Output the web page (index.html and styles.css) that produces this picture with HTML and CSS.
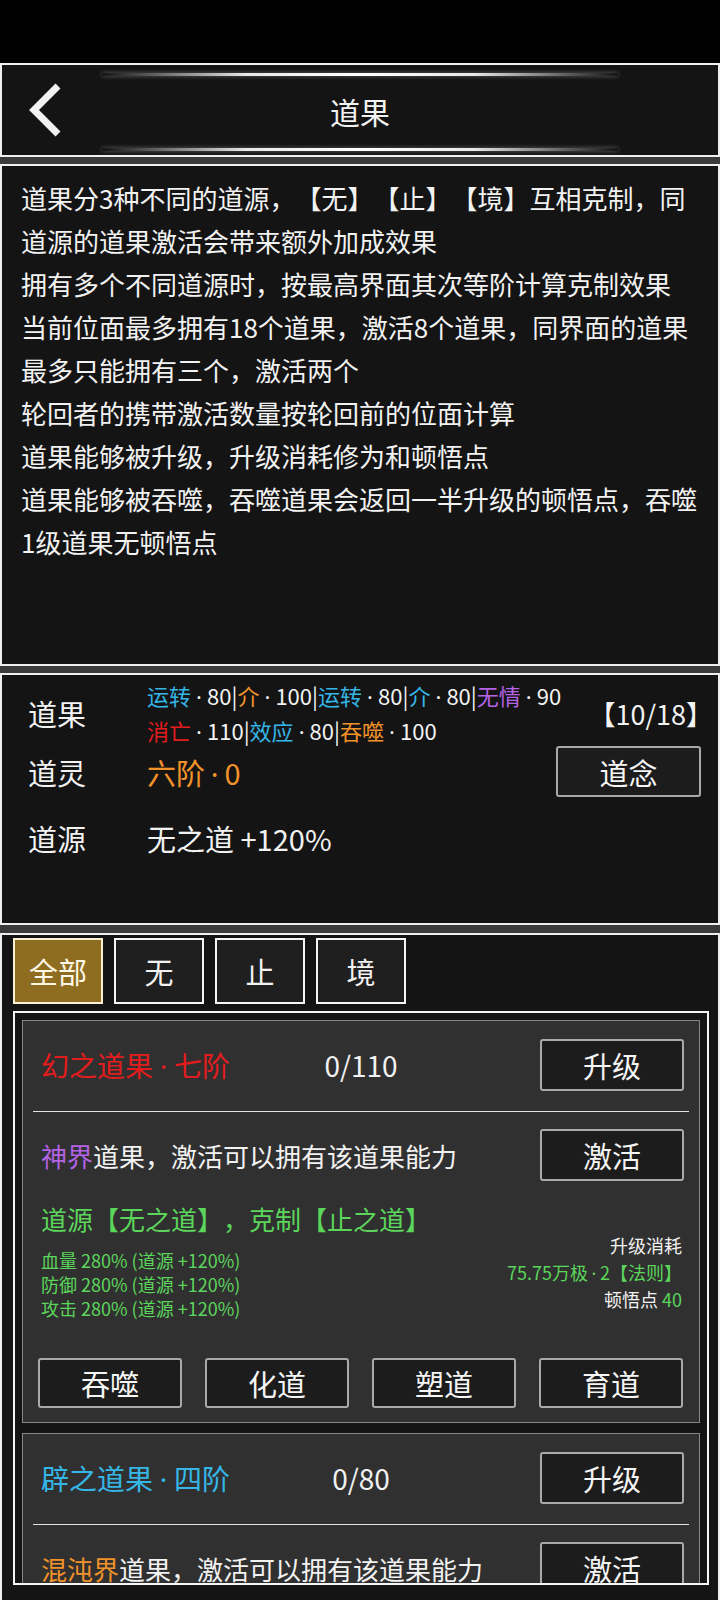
FILE: index.html
```html
<!DOCTYPE html>
<html lang="zh-CN">
<head>
    <meta charset="UTF-8">
    <meta name="viewport" content="width=720, initial-scale=1.0">
    <title>道果</title>
    <link rel="stylesheet" href="styles.css">
</head>
<body>
    <div class="topbar"></div>

    <div class="panel header">
        <svg class="back" width="40" height="54" viewBox="0 0 40 54">
            <polyline points="32,3 8,27 32,51" fill="none" stroke="#f2f2f2" stroke-width="7" stroke-linejoin="miter"/>
        </svg>
        <div class="header-mid">
            <div class="glow"></div>
            <h1 class="title">道果</h1>
            <div class="glow"></div>
        </div>
    </div>

    <div class="panel desc">
        <p>道果分3种不同的道源，【无】【止】【境】互相克制，同</p>
        <p>道源的道果激活会带来额外加成效果</p>
        <p>拥有多个不同道源时，按最高界面其次等阶计算克制效果</p>
        <p>当前位面最多拥有18个道果，激活8个道果，同界面的道果</p>
        <p>最多只能拥有三个，激活两个</p>
        <p>轮回者的携带激活数量按轮回前的位面计算</p>
        <p>道果能够被升级，升级消耗修为和顿悟点</p>
        <p>道果能够被吞噬，吞噬道果会返回一半升级的顿悟点，吞噬</p>
        <p>1级道果无顿悟点</p>
    </div>

    <div class="panel stats">
        <div class="stat-row row-fruit">
            <div class="stat-label">道果</div>
            <div class="effects">
                <div><span class="cyan">运转</span><span class="dot">·</span>80|<span class="orange">介</span><span class="dot">·</span>100|<span class="cyan">运转</span><span class="dot">·</span>80|<span class="cyan">介</span><span class="dot">·</span>80|<span class="purple">无情</span><span class="dot">·</span>90</div>
                <div><span class="red">消亡</span><span class="dot">·</span>110|<span class="cyan">效应</span><span class="dot">·</span>80|<span class="orange">吞噬</span><span class="dot">·</span>100</div>
            </div>
            <div class="count">【10/18】</div>
        </div>
        <div class="stat-row row-spirit">
            <div class="stat-label">道灵</div>
            <div class="stat-value orange">六阶<span class="dot">·</span>0</div>
            <button class="btn btn-mind">道念</button>
        </div>
        <div class="stat-row row-source">
            <div class="stat-label">道源</div>
            <div class="stat-value">无之道 +120%</div>
        </div>
    </div>

    <div class="panel list">
        <div class="tabs">
            <div class="tab active">全部</div>
            <div class="tab">无</div>
            <div class="tab">止</div>
            <div class="tab">境</div>
        </div>
        <div class="frame">
            <div class="card">
                <div class="card-head">
                    <div class="card-title red">幻之道果<span class="dot">·</span>七阶</div>
                    <div class="card-progress">0/110</div>
                    <button class="btn btn-side">升级</button>
                </div>
                <div class="divider"></div>
                <div class="card-act">
                    <div class="act-text"><span class="purple">神界</span>道果，激活可以拥有该道果能力</div>
                    <button class="btn btn-side">激活</button>
                </div>
                <div class="source-line green">道源【无之道】，克制【止之道】</div>
                <div class="card-info">
                    <div class="attrs green">
                        <div>血量 280% (道源 +120%)</div>
                        <div>防御 280% (道源 +120%)</div>
                        <div>攻击 280% (道源 +120%)</div>
                    </div>
                    <div class="cost">
                        <div>升级消耗</div>
                        <div class="green">75.75万极<span class="dot">·</span>2【法则】</div>
                        <div>顿悟点 <span class="green">40</span></div>
                    </div>
                </div>
                <div class="card-actions">
                    <button class="btn btn-action">吞噬</button>
                    <button class="btn btn-action">化道</button>
                    <button class="btn btn-action">塑道</button>
                    <button class="btn btn-action">育道</button>
                </div>
            </div>
            <div class="card">
                <div class="card-head">
                    <div class="card-title cyan">辟之道果<span class="dot">·</span>四阶</div>
                    <div class="card-progress">0/80</div>
                    <button class="btn btn-side">升级</button>
                </div>
                <div class="divider"></div>
                <div class="card-act">
                    <div class="act-text"><span class="orange">混沌界</span>道果，激活可以拥有该道果能力</div>
                    <button class="btn btn-side">激活</button>
                </div>
                <div class="source-line green">道源【无之道】，克制【止之道】</div>
            </div>
        </div>
    </div>
</body>
</html>
```

FILE: styles.css
```css
* {
    box-sizing: border-box;
}

body {
    margin: 0;
    width: 720px;
    height: 1600px;
    overflow: hidden;
    background-color: #3b3b3b;
    font-family: "Noto Sans CJK SC", "Noto Sans", sans-serif;
    color: #f2f2f2;
    text-spacing-trim: space-all;
}

.topbar {
    height: 63px;
    background-color: #000;
}

.panel {
    background-color: #141414;
    border: 2px solid #efefef;
}

.panel + .panel {
    margin-top: 7px;
}

.cyan { color: #35b6e6; }
.orange { color: #f2922a; }
.purple { color: #b463e6; }
.red { color: #e31c1e; }
.green { color: #5bd55b; }

.dot {
    font-family: "Noto Sans", sans-serif;
    margin: 0 0.2em;
}

/* header */
.header {
    height: 94px;
    display: grid;
    grid-template-columns: 100px 1fr 100px;
    align-items: center;
}

.back {
    margin-left: 24px;
}

.header-mid {
    display: flex;
    flex-direction: column;
    align-self: stretch;
    padding-top: 8px;
}

.glow {
    height: 3px;
    background: linear-gradient(90deg, rgba(255,255,255,0), rgba(255,255,255,0.9) 28%, #fff 50%, rgba(255,255,255,0.9) 72%, rgba(255,255,255,0));
    box-shadow: 0 0 4px rgba(255, 255, 255, 0.35);
}

.title {
    margin: 0;
    height: 72px;
    line-height: 70px;
    text-align: center;
    font-size: 30px;
    font-weight: normal;
}

/* description */
.desc {
    height: 502px;
    padding: 10px 0 0 19px;
    font-size: 26px;
    line-height: 43px;
}

.desc p {
    margin: 0;
    white-space: nowrap;
}

/* stats */
.stats {
    height: 252px;
    padding: 3px 17px 0 26px;
}

.stat-row {
    display: grid;
    grid-template-columns: 119px 1fr auto;
    align-items: center;
}

.stat-label,
.stat-value {
    font-size: 29px;
}

.row-fruit {
    height: 68px;
}

.effects {
    font-size: 22px;
    line-height: 34px;
    white-space: nowrap;
}

.effects .dot {
    margin: 0 0.23em;
}

.count {
    font-size: 27px;
    margin-right: -12px;
}

.row-spirit {
    height: 51px;
}

.row-source {
    height: 48px;
    margin-top: 17px;
}

/* buttons */
.btn {
    background-color: #1c1c1c;
    border: 2px solid #a9a9a9;
    border-radius: 3px;
    color: #f5f5f5;
    font-family: inherit;
    font-size: 29px;
    padding: 0;
}

.btn-mind {
    width: 145px;
    height: 51px;
}

/* tabs + list */
.list {
    height: 690px;
    margin-top: 8px !important;
    padding: 3px 9px 0 11px;
}

.tabs {
    display: flex;
    gap: 11px;
}

.tab {
    width: 90px;
    height: 66px;
    border: 2px solid #f5f5f5;
    background-color: #1f1f1f;
    font-size: 29px;
    line-height: 62px;
    text-align: center;
}

.tab.active {
    background-color: #8e6c20;
    border-color: #fbf1d2;
    color: #fff8e6;
}

.frame {
    margin-top: 7px;
    height: 574px;
    border: 2px solid #f5f5f5;
    padding: 7px;
    overflow: hidden;
}

.card {
    border: 1px solid #868686;
    background-color: #303030;
    padding: 18px 15px 14px 15px;
    margin-bottom: 10px;
}

.card-head {
    display: grid;
    grid-template-columns: 1fr auto 1fr;
    align-items: center;
}

.card-title {
    padding-left: 3px;
    font-size: 28px;
}

.card-title .dot {
    margin: 0 0.24em;
}

.card-progress {
    font-size: 28px;
}

.btn-side {
    justify-self: end;
    width: 144px;
    height: 52px;
}

.divider {
    height: 1px;
    background-color: #e2e2e2;
    margin: 20px -5px 0;
}

.card-act {
    display: flex;
    justify-content: space-between;
    align-items: center;
    margin-top: 17px;
}

.act-text {
    padding-left: 3px;
    font-size: 26px;
}

.source-line {
    margin-top: 21px;
    padding-left: 3px;
    font-size: 26px;
    line-height: 34px;
}

.card-info {
    display: flex;
    justify-content: space-between;
    align-items: flex-start;
    height: 84px;
    font-size: 18px;
}

.attrs {
    padding-left: 3px;
    margin-top: 12px;
    line-height: 24px;
}

.cost {
    text-align: right;
    margin-top: -4px;
    margin-right: 2px;
    line-height: 26.5px;
}

.card-actions {
    display: flex;
    gap: 23px;
    margin-top: 38px;
}

.btn-action {
    width: 144px;
    height: 50px;
}
```
